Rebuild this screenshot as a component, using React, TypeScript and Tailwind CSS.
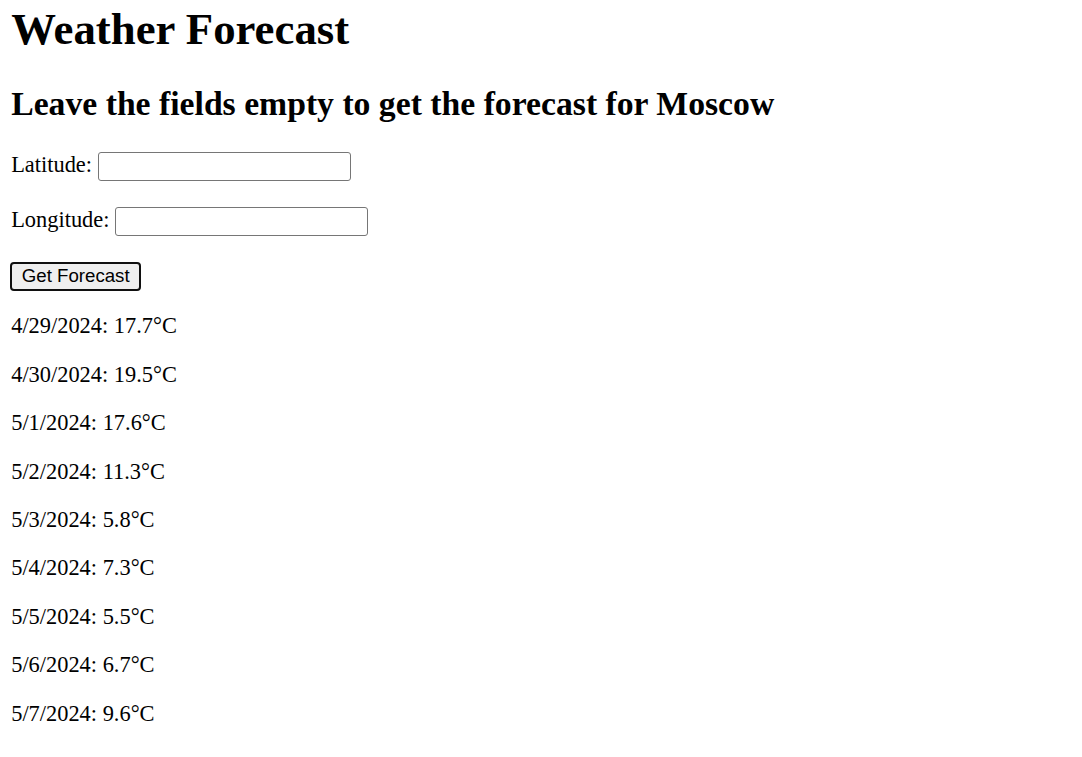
const forecast = [
  { date: "4/29/2024", temp: 17.7 },
  { date: "4/30/2024", temp: 19.5 },
  { date: "5/1/2024", temp: 17.6 },
  { date: "5/2/2024", temp: 11.3 },
  { date: "5/3/2024", temp: 5.8 },
  { date: "5/4/2024", temp: 7.3 },
  { date: "5/5/2024", temp: 5.5 },
  { date: "5/6/2024", temp: 6.7 },
  { date: "5/7/2024", temp: 9.6 },
];

function Field({ label, className }: { label: string; className?: string }) {
  return (
    <div className={className}>
      <label className="flex items-start">
        <span className="whitespace-pre leading-[25.7px]">{label} </span>
        <input
          type="text"
          className="h-[29px] w-[253px] rounded-[3px] border border-[#767676] bg-white px-[3px] outline-none"
        />
      </label>
    </div>
  );
}

export default function App() {
  return (
    <div className="min-h-screen bg-white pl-[11.2px] font-['Liberation_Serif',serif] text-[22.4px] text-black">
      <h1 className="pt-[4px] text-[44.8px] font-bold leading-[51.5px]">Weather Forecast</h1>
      <h2 className="mt-[29px] text-[33.7px] font-bold leading-[38.6px]">
        Leave the fields empty to get the forecast for Moscow
      </h2>

      <Field label="Latitude:" className="mt-[28.6px]" />
      <Field label="Longitude:" className="mt-[26.3px]" />

      <div className="mt-[25.7px] flex">
        <button className="-ml-[1px] h-[29px] w-[131px] rounded-[4px] border-[2.5px] border-[#101010] bg-[#efefef] font-['Liberation_Sans',sans-serif] text-[18.67px] leading-none text-black">
          Get Forecast
        </button>
      </div>

      <div className="mt-[22.4px]">
        {forecast.map((day) => (
          <p key={day.date} className="mb-[22.4px] leading-[26.1px]">
            {day.date}: {day.temp}°C
          </p>
        ))}
      </div>
    </div>
  );
}
